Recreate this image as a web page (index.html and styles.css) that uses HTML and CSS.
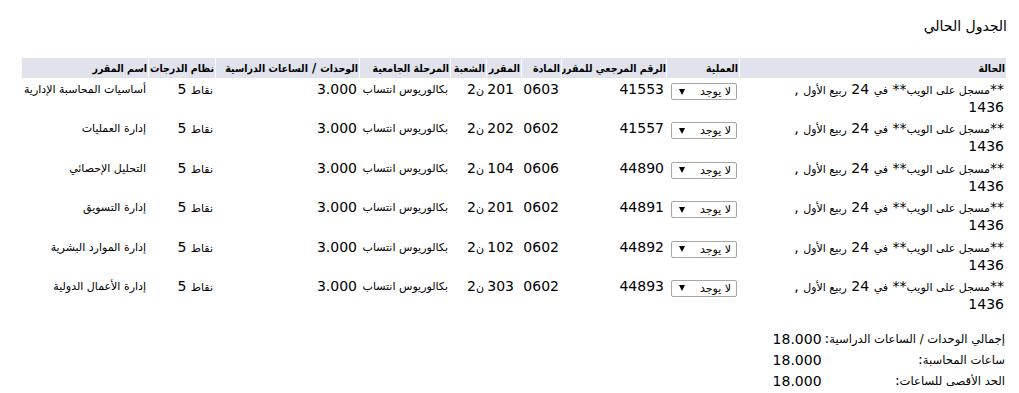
FILE: index.html
```html
<!DOCTYPE html>
<html lang="ar" dir="rtl">
<head>
<meta charset="utf-8">
<title>الجدول الحالي</title>
<link rel="stylesheet" href="styles.css">
</head>
<body>
<h1 class="title">الجدول الحالي</h1>
<table class="schedule">
  <colgroup>
    <col class="c-status"><col class="c-op"><col class="c-ref"><col class="c-subj"><col class="c-course"><col class="c-sec"><col class="c-level"><col class="c-units"><col class="c-grade"><col class="c-name">
  </colgroup>
  <thead>
    <tr>
      <th>الحالة</th><th>العملية</th><th class="th-ref">الرقم المرجعي للمقرر</th><th>المادة</th><th>المقرر</th><th>الشعبة</th><th>المرحلة الجامعية</th><th>الوحدات<span class="slash"> / </span>الساعات الدراسية</th><th>نظام الدرجات</th><th>اسم المقرر</th>
    </tr>
  </thead>
  <tbody>
    <tr>
      <td>**<span class="ar">مسجل على الويب</span>** <span class="ar">في</span> 24 <span class="ar">ربيع الأول</span> ,<br>1436</td>
      <td><span class="select"><span class="select-text">لا يوجد</span><span class="select-arrow"></span></span></td>
      <td>41553</td><td>0603</td><td class="course">201</td><td><span class="ar">ن</span>2</td><td class="ar">بكالوريوس انتساب</td><td>3.000</td><td><span class="ar">نقاط</span> 5</td><td class="ar">أساسيات المحاسبة الإدارية</td>
    </tr>
    <tr>
      <td>**<span class="ar">مسجل على الويب</span>** <span class="ar">في</span> 24 <span class="ar">ربيع الأول</span> ,<br>1436</td>
      <td><span class="select"><span class="select-text">لا يوجد</span><span class="select-arrow"></span></span></td>
      <td>41557</td><td>0602</td><td class="course">202</td><td><span class="ar">ن</span>2</td><td class="ar">بكالوريوس انتساب</td><td>3.000</td><td><span class="ar">نقاط</span> 5</td><td class="ar">إدارة العمليات</td>
    </tr>
    <tr>
      <td>**<span class="ar">مسجل على الويب</span>** <span class="ar">في</span> 24 <span class="ar">ربيع الأول</span> ,<br>1436</td>
      <td><span class="select"><span class="select-text">لا يوجد</span><span class="select-arrow"></span></span></td>
      <td>44890</td><td>0606</td><td class="course">104</td><td><span class="ar">ن</span>2</td><td class="ar">بكالوريوس انتساب</td><td>3.000</td><td><span class="ar">نقاط</span> 5</td><td class="ar">التحليل الإحصائي</td>
    </tr>
    <tr>
      <td>**<span class="ar">مسجل على الويب</span>** <span class="ar">في</span> 24 <span class="ar">ربيع الأول</span> ,<br>1436</td>
      <td><span class="select"><span class="select-text">لا يوجد</span><span class="select-arrow"></span></span></td>
      <td>44891</td><td>0602</td><td class="course">201</td><td><span class="ar">ن</span>2</td><td class="ar">بكالوريوس انتساب</td><td>3.000</td><td><span class="ar">نقاط</span> 5</td><td class="ar">إدارة التسويق</td>
    </tr>
    <tr>
      <td>**<span class="ar">مسجل على الويب</span>** <span class="ar">في</span> 24 <span class="ar">ربيع الأول</span> ,<br>1436</td>
      <td><span class="select"><span class="select-text">لا يوجد</span><span class="select-arrow"></span></span></td>
      <td>44892</td><td>0602</td><td class="course">102</td><td><span class="ar">ن</span>2</td><td class="ar">بكالوريوس انتساب</td><td>3.000</td><td><span class="ar">نقاط</span> 5</td><td class="ar">إدارة الموارد البشرية</td>
    </tr>
    <tr>
      <td>**<span class="ar">مسجل على الويب</span>** <span class="ar">في</span> 24 <span class="ar">ربيع الأول</span> ,<br>1436</td>
      <td><span class="select"><span class="select-text">لا يوجد</span><span class="select-arrow"></span></span></td>
      <td>44893</td><td>0602</td><td class="course">303</td><td><span class="ar">ن</span>2</td><td class="ar">بكالوريوس انتساب</td><td>3.000</td><td><span class="ar">نقاط</span> 5</td><td class="ar">إدارة الأعمال الدولية</td>
    </tr>
  </tbody>
</table>
<table class="totals">
  <tr><td><span class="ar-lg">إجمالي الوحدات / الساعات الدراسية</span>:</td><td>18.000</td></tr>
  <tr><td><span class="ar-lg">ساعات المحاسبة</span>:</td><td>18.000</td></tr>
  <tr><td><span class="ar-lg">الحد الأقصى للساعات</span>:</td><td>18.000</td></tr>
</table>
</body>
</html>
```

FILE: styles.css
```css
html { background: #fff; }
body {
  margin: 8px 12px 8px 8px;
  direction: rtl;
  font-family: "DejaVu Sans", sans-serif;
  font-size: 14px;
  color: #000;
}
.title {
  font-size: 14px;
  font-weight: normal;
  line-height: 19px;
  margin: 9px 0 21px;
}
.schedule {
  width: 986px;
  table-layout: fixed;
  border-collapse: separate;
  border-spacing: 1px;
}
.c-status { width: 266px; }
.c-op { width: 72px; }
.c-ref { width: 104px; }
.c-subj { width: 39px; }
.c-course { width: 34px; }
.c-sec { width: 35px; }
.c-level { width: 90px; }
.c-units { width: 143px; }
.c-grade { width: 66px; }
.c-name { width: 126px; }
.schedule th {
  background: #e0e3ec;
  font-family: "DejaVu Sans Condensed", "DejaVu Sans", sans-serif;
  font-stretch: condensed;
  font-size: 10.5px;
  font-weight: bold;
  text-align: right;
  padding: 1px 1px;
  line-height: 17px;
  white-space: nowrap;
  overflow: hidden;
}
.schedule th.th-ref { padding: 1px 0; }
.schedule th .slash {
  font-family: "DejaVu Sans", sans-serif;
  font-size: 13px;
}
.schedule td {
  vertical-align: top;
  text-align: right;
  padding: 2px 2px 1.4px;
  line-height: 17px;
  white-space: nowrap;
}
.schedule td.course { padding-right: 7px; }
.ar { font-size: 11px; }
.ar-lg { font-size: 11.6px; }
.select {
  display: inline-flex;
  align-items: center;
  justify-content: space-between;
  box-sizing: border-box;
  width: 66px;
  height: 17px;
  margin-top: 2px;
  vertical-align: top;
  border: 1px solid #a6a6a6;
  border-radius: 2px;
  background: #fff;
  padding: 0 5px 0 7px;
  font-size: 11px;
  line-height: 15px;
}
.select-arrow {
  width: 0;
  height: 0;
  border-left: 3px solid transparent;
  border-right: 3px solid transparent;
  border-top: 6px solid #000;
}
.totals {
  margin-top: 13px;
  border-collapse: separate;
  border-spacing: 1px;
}
.totals td {
  padding: 1px 1px;
  line-height: 17px;
  text-align: right;
  white-space: nowrap;
}
```
